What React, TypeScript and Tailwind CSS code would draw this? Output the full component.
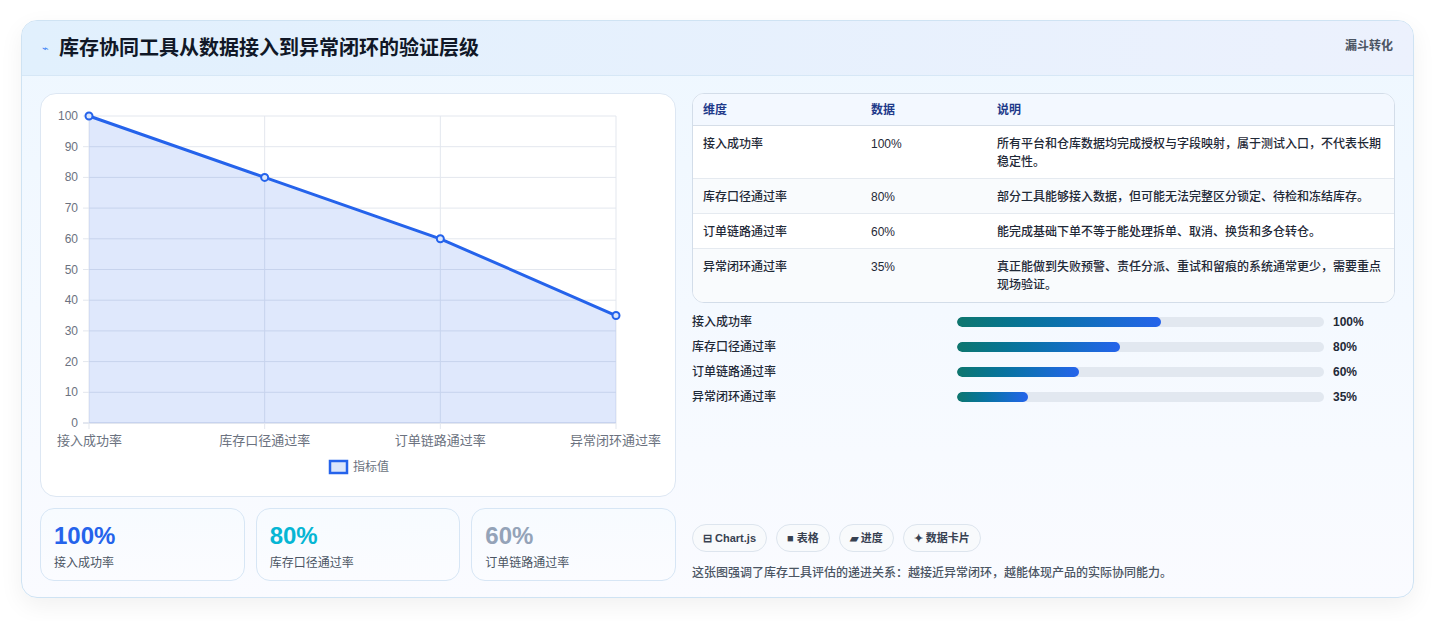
import React from "react";

const labels = ["接入成功率", "库存口径通过率", "订单链路通过率", "异常闭环通过率"];
const vals = [100, 80, 60, 35];
const rows = [
  ["接入成功率", "100%", "所有平台和仓库数据均完成授权与字段映射，属于测试入口，不代表长期稳定性。"],
  ["库存口径通过率", "80%", "部分工具能够接入数据，但可能无法完整区分锁定、待检和冻结库存。"],
  ["订单链路通过率", "60%", "能完成基础下单不等于能处理拆单、取消、换货和多仓转仓。"],
  ["异常闭环通过率", "35%", "真正能做到失败预警、责任分派、重试和留痕的系统通常更少，需要重点现场验证。"],
];

function Chart() {
  const x0 = 48, x1 = 575, y0 = 22, y1 = 329;
  const xs = vals.map((_, i) => x0 + ((x1 - x0) * i) / 3);
  const ys = vals.map((v) => y1 - ((y1 - y0) * v) / 100);
  const pts = xs.map((x, i) => `${x},${ys[i]}`).join(" ");
  return (
    <svg width="636" height="403" className="block" style={{ fontFamily: "'Liberation Sans','Noto Sans CJK SC',sans-serif" }}>
      {Array.from({ length: 11 }).map((_, i) => {
        const y = y0 + ((y1 - y0) * i) / 10;
        return (
          <g key={i}>
            <line x1={x0 - 6} x2={x1} y1={y} y2={y} stroke={i === 10 ? "#c7cfe0" : "#e3e7ee"} />
            <text x={x0 - 11} y={y + 4} fontSize="12" fill="#6b7280" textAnchor="end">{100 - i * 10}</text>
          </g>
        );
      })}
      {xs.map((x, i) => (
        <line key={i} x1={x} x2={x} y1={y0} y2={y1 + 6} stroke="#e3e7ee" />
      ))}
      <polygon points={`${x0},${y1} ${pts} ${x1},${y1}`} fill="rgba(37,99,235,0.15)" />
      <polyline points={pts} fill="none" stroke="#2563eb" strokeWidth="3" />
      {xs.map((x, i) => (
        <circle key={i} cx={x} cy={ys[i]} r="3.5" fill="#dbe6fb" stroke="#2563eb" strokeWidth="2" />
      ))}
      {xs.map((x, i) => (
        <text key={i} x={i === 0 ? 16 : i === 3 ? 620 : x} y={351} fontSize="13" fill="#6b7280" textAnchor={i === 0 ? "start" : i === 3 ? "end" : "middle"}>{labels[i]}</text>
      ))}
      <rect x="289" y="367" width="17" height="12" fill="#dbe6fb" stroke="#2563eb" strokeWidth="2.5" />
      <text x="312" y="377" fontSize="12" fill="#6b7280">指标值</text>
    </svg>
  );
}

export default function App() {
  return (
    <div className="min-h-[621px] bg-white pt-[20px] px-[21px]" style={{ fontFamily: "'Liberation Sans','Noto Sans CJK SC',sans-serif" }}>
      <div className="w-[1393px] h-[578px] rounded-[16px] border border-[#cfe3f3] bg-gradient-to-b from-[#eef7ff] to-[#fafbff] shadow-[0_8px_24px_rgba(0,0,0,0.06)] overflow-hidden">
        <div className="h-[55px] bg-gradient-to-r from-[#e1f0fd] to-[#ecf1fd] border-b border-[#d6e7f6] flex items-center justify-between pl-[20px] pr-[20px]">
          <div className="flex items-center gap-[10px]">
            <span className="text-[11px] text-[#3b82f6]">⌁</span>
            <span className="text-[20px] font-bold text-[#111827]">库存协同工具从数据接入到异常闭环的验证层级</span>
          </div>
          <span className="text-[12px] font-bold text-[#4b5563] self-start mt-[16px]">漏斗转化</span>
        </div>
        <div className="flex gap-[16px] px-[18px] pt-[17px]">
          <div className="w-[636px] flex flex-col gap-[11px]">
            <div className="h-[404px] rounded-[16px] border border-[#dde7f3] bg-white overflow-hidden">
              <Chart />
            </div>
            <div className="grid grid-cols-3 gap-[11px]">
              {[["100%", "text-[#2563eb]", "接入成功率"], ["80%", "text-[#06b6d4]", "库存口径通过率"], ["60%", "text-[#94a3b8]", "订单链路通过率"]].map(([v, c, l]) => (
                <div key={v} className="h-[73px] rounded-[14px] border border-[#d7e6f5] bg-gradient-to-b from-[#f7fbff] to-[#fbfcff] px-[13px] pt-[12px]">
                  <div className={`text-[24px] leading-[30px] font-extrabold ${c}`}>{v}</div>
                  <div className="text-[12px] text-[#4b5563] mt-[3px]">{l}</div>
                </div>
              ))}
            </div>
          </div>
          <div className="w-[704px] flex flex-col">
            <div className="rounded-[12px] border border-[#d3dde9] overflow-hidden bg-white">
              <div className="h-[32px] flex items-center bg-[#f3f8ff] border-b border-[#d6dee8] text-[12px] font-bold text-[#1e3a8a]">
                <div className="w-[178px] pl-[10px]">维度</div>
                <div className="w-[126px]">数据</div>
                <div className="flex-1">说明</div>
              </div>
              {rows.map((r, i) => (
                <div key={i} className={`flex items-center text-[12px] font-medium text-[#1f2937] leading-[18px] ${i % 2 ? "bg-[#f9fbfd]" : "bg-white"} ${i < 3 ? "border-b border-[#e5eaf0]" : ""} ${i === 0 || i === 3 ? "h-[53px]" : "h-[35px]"}`}>
                  <div className="w-[178px] pl-[10px] self-start pt-[9px]">{r[0]}</div>
                  <div className="w-[126px] self-start pt-[9px]">{r[1]}</div>
                  <div className="flex-1 pr-[10px] self-start pt-[9px]">{r[2]}</div>
                </div>
              ))}
            </div>
            <div className="flex flex-col gap-[7px] mt-[10px]">
              {labels.map((l, i) => (
                <div key={l} className="flex items-center h-[18px] text-[12px] font-medium">
                  <div className="w-[265px] text-[#1f2937]">{l}</div>
                  <div className="w-[367px] h-[10px] rounded-full bg-[#e2e8f0] overflow-hidden">
                    <div className="h-full rounded-full bg-gradient-to-r from-[#0f766e] to-[#2563eb]" style={{ width: `${vals[i] * 0.556}%` }} />
                  </div>
                  <div className="ml-[9px] font-bold text-[#1f2937]">{vals[i]}%</div>
                </div>
              ))}
            </div>
            <div className="flex gap-[9px] mt-[118px]">
              {["⊟ Chart.js", "■ 表格", "▰ 进度", "✦ 数据卡片"].map((c) => (
                <span key={c} className="h-[28px] px-[10px] rounded-full border border-[#dde5ee] bg-[#f8fafc] text-[11px] font-bold text-[#374151] flex items-center">{c}</span>
              ))}
            </div>
            <div className="text-[12px] font-medium text-[#4b5563] mt-[12px]">这张图强调了库存工具评估的递进关系：越接近异常闭环，越能体现产品的实际协同能力。</div>
          </div>
        </div>
      </div>
    </div>
  );
}
